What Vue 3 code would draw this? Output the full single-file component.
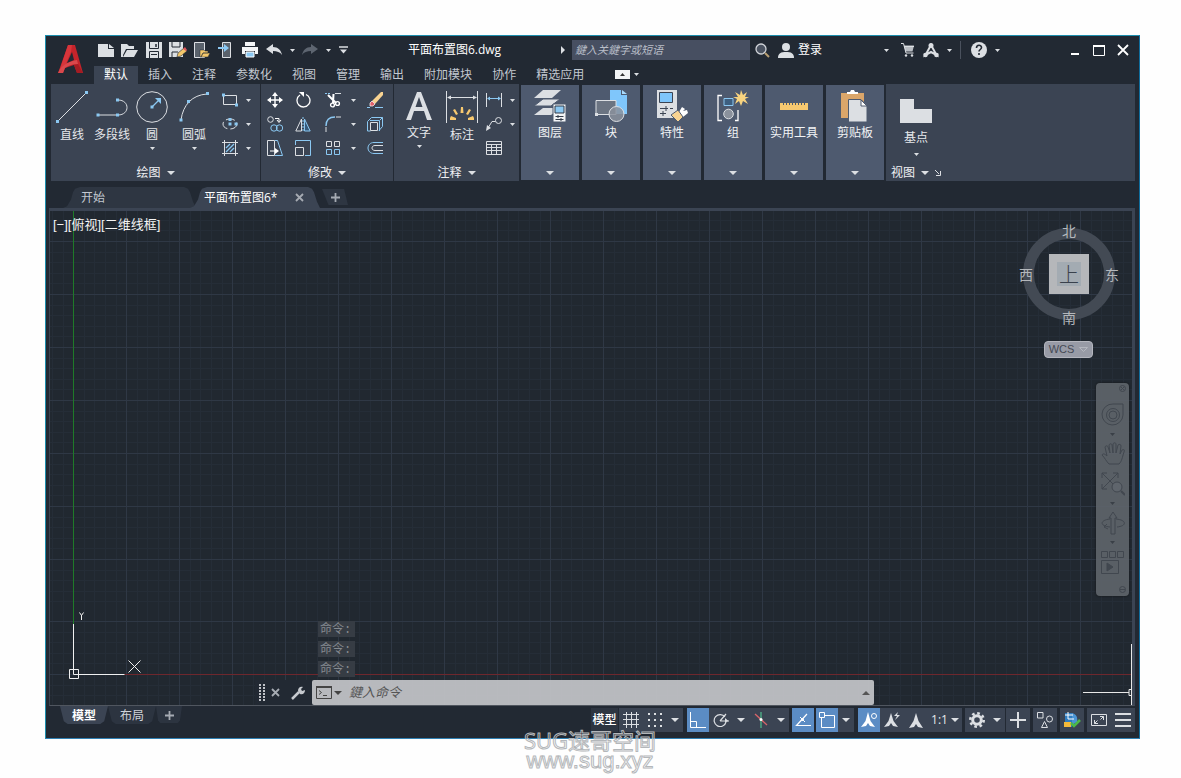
<script setup>
import { h } from 'vue'

const W = '#dcdfe3'
const B = '#8bc8f2'
const sq = (x, y) => `<path d="M${x - 1.5} ${y - 1.5}h3v3h-3z" fill="${B}" stroke="none"/>`

const icons = {
  logo: [25, 28, `<path d="M10 0h7l8 28h-6l-3-8-9 3-2 5H0z" fill="#c4242b" stroke="none"/><path d="M10 0h4l-1 7L7 21l-5 3z" fill="#d8353b" stroke="none"/><path d="M2 24c4-5 10-8 17-9l1 4c-6 0-10 2-13 4l-2 5H0z" fill="#d9484c" stroke="none"/><path d="M14 7l-5 11 7-3z" fill="#222933" stroke="none"/><path d="M16 20l4-1 5 9h-6z" fill="#a51c23" stroke="none"/>`],
  new: [16, 14, `<path d="M0 1h10v5h6v8H0z M11 1l5 4h-5z" fill="${W}" stroke="none"/>`],
  open: [18, 14, `<path d="M0 1h6l2 2h5v3H5l-3 6v2H0z M6 7h11l-4 7H2z" fill="${W}" stroke="none"/>`],
  save: [16, 16, `<path d="M0 0h16v16H0z" fill="${W}" stroke="none"/><path d="M3.500 0v6.500h9V0M3.500 16V9.500h9V16" stroke="#222933"/><path d="M10 2v3" stroke="#222933" stroke-width="1.500"/><path d="M5 12.500h6" stroke="#222933"/>`],
  saveas: [18, 16, `<path d="M0 0h14v15H0z" fill="${W}" stroke="none"/><path d="M3 0v5h8V0M3 15v-5h6" stroke="#222933"/><path d="M8 15l1-4 6-5 3 3-6 5z" fill="#f3c76b" stroke="#222933" stroke-width=".6"/><path d="M14 7l2-2 2 3-1 1z" fill="#e0545c" stroke="none"/>`],
  opendev: [16, 16, `<path d="M.5.5h10v15H.5z" fill="#5a626c" stroke="${W}"/><path d="M6 8h4l1 1h3v2H9l-2 4H6z M9 11h7l-2 4H7z" fill="#f3c76b" stroke="#222933" stroke-width=".5"/>`],
  savedev: [16, 16, `<path d="M4.500.5h8v15h-8z" fill="#5a626c" stroke="${W}"/><path d="M0 5h6V2l5 4-5 4V7H0z" fill="${B}" stroke="none"/>`],
  print: [16, 16, `<path d="M3 0h10v4H3z M0 5h16v7h-3V9H3v3H0z" fill="#f2f4f6" stroke="none"/><path d="M4 10h8v5H4z" fill="${B}" stroke="#fff"/>`],
  undo: [16, 12, `<path d="M7 0v3c5 0 8 3 9 8-2-3-5-4-9-4v3L0 5z" fill="${W}" stroke="none"/>`],
  redo: [16, 12, `<path d="M9 0v3C4 3 1 6 0 11c2-3 5-4 9-4v3l7-5z" fill="#5d6570" stroke="none"/>`],
  custom: [9, 8, `<path d="M0 1h9" stroke="${W}" stroke-width="1.500"/><path d="M1 3.500h7l-3.500 4z" fill="${W}"/>`],
  dn: [5, 3, `<path d="M0 0h5L2.500 3z" fill="${W}" stroke="none"/>`],
  DN: [8, 4, `<path d="M0 0h8L4 4z" fill="${W}" stroke="none"/>`],
  rt: [4, 8, `<path d="M0 0l4 4-4 4z" fill="${W}" stroke="none"/>`],
  ribbonToggle: [15, 9, `<path d="M0 0h15v9H0z" fill="#f2f4f6" stroke="none"/><path d="M5 6h5L7.500 3z" fill="#333" stroke="none"/>`],
  search: [15, 15, `<circle cx="6" cy="6" r="5" fill="#4a5260" stroke="#d0d3d8" stroke-width="1.300"/><path d="M10 10l4 4" stroke="#b99f72" stroke-width="2"/>`],
  user: [16, 15, `<circle cx="8" cy="4" r="4" fill="${W}" stroke="none"/><path d="M0 15c0-5 3-6 8-6s8 1 8 6z" fill="${W}" stroke="none"/>`],
  cart: [13, 14, `<path d="M3 2.500h10l-1.500 6H4.500z" fill="#b9bdc3" stroke="none"/><path d="M0 .5h2.500l2.500 9.500h7.500M3 3.500h10" stroke="${W}"/><circle cx="5" cy="12.500" r="1.200" fill="${W}" stroke="none"/><circle cx="11" cy="12.500" r="1.200" fill="${W}" stroke="none"/>`],
  app: [16, 15, `<path d="M8 2L2.500 12 8 9l5.500 3z" stroke="${W}" stroke-width="2"/><circle cx="8" cy="2.500" r="2.500" fill="${W}" stroke="none"/><circle cx="2.500" cy="12" r="2.300" fill="${W}" stroke="none"/><circle cx="13.500" cy="12" r="2.300" fill="${W}" stroke="none"/>`],
  help: [16, 16, `<circle cx="8" cy="8" r="8" fill="${W}" stroke="none"/><path d="M5.500 6c0-3.500 5-3.500 5-.5 0 2-2.500 2-2.500 4M8 11v2" stroke="#222933" stroke-width="1.600"/>`],
  min: [8, 10, `<path d="M0 9h8" stroke="#fff" stroke-width="2"/>`],
  max: [12, 11, `<path d="M.5 1h11v9.500H.5z" stroke="#fff"/><path d="M0 1h12" stroke="#fff" stroke-width="2"/>`],
  close: [12, 12, `<path d="M1 1l10 10M11 1L1 11" stroke="#fff" stroke-width="1.800"/>`],

  line: [32, 32, `<path d="M2 30L30 2" stroke="${W}"/>${sq(1.5, 30.5)}${sq(30.5, 1.5)}`],
  pline: [32, 32, `<path d="M2 24h20M22 9c12 0 12 15 0 15" stroke="${W}"/>${sq(2, 24)}${sq(21.5, 24)}${sq(21.5, 9)}`],
  circle: [32, 32, `<circle cx="16" cy="16" r="15.300" stroke="${W}"/><path d="M16 16l7-7" stroke="${B}" stroke-width="1.300"/><path d="M25 7v6l-6-6z" fill="${B}" stroke="none"/>${sq(16, 16)}`],
  arc: [32, 32, `<path d="M3 29C5 14 14 4 29 3" stroke="${W}"/>${sq(3, 29)}${sq(10.5, 10.5)}${sq(29.5, 2.5)}`],
  rect: [16, 14, `<path d="M1.500 2.500h13v9h-13z" stroke="${W}"/>${sq(1.5, 2)}${sq(14.5, 12)}`],
  ellipse: [16, 12, `<ellipse cx="8" cy="6" rx="7" ry="5" stroke="${W}" stroke-dasharray="9 3"/>${sq(8, 1.5)}${sq(8, 6)}${sq(14, 6)}`],
  hatch: [16, 16, `<path d="M2.500 0v16M13.500 0v16M0 2.500h16M0 13.500h16" stroke="${W}"/><path d="M4 8l4-4M4 12l8-8M8 12l4-4" stroke="${B}" stroke-width="1.300"/>`],
  move: [16, 16, `<path d="M8 2v12M2 8h12" stroke="#fff" stroke-width="1.400"/><path d="M8 0l3 4H5zM8 16l3-4H5zM0 8l4-3v6zM16 8l-4-3v6z" fill="#fff" stroke="none"/>`],
  rotate: [16, 16, `<path d="M5 3a6.500 6.500 0 1 0 6-.5" stroke="#fff" stroke-width="1.300"/><path d="M4 0h5v5z" fill="#fff" stroke="none"/>`],
  trim: [16, 16, `<path d="M0 1.500h6" stroke="${B}" stroke-dasharray="2 1"/><path d="M10 1.500h6" stroke="${W}"/><path d="M3 3l8 8M8.500 2L8 11" stroke="#fff" stroke-width="2"/><circle cx="7.500" cy="13" r="1.900" stroke="#fff" stroke-width="1.400"/><circle cx="12.500" cy="11.500" r="1.900" stroke="#fff" stroke-width="1.400"/>`],
  erase: [16, 17, `<path d="M5 9l9-9h2v3l-8 9z" fill="#f8d391" stroke="none"/><path d="M5 9l3 3-2 2H3v-3z" fill="#e2616a" stroke="#fff" stroke-width=".7"/><path d="M0 15.500h3M8 15.500h8" stroke="${B}"/>`],
  copy: [16, 16, `<circle cx="3.500" cy="3.500" r="2.800" stroke="${W}"/><circle cx="7" cy="12" r="3.200" stroke="${B}"/><circle cx="12.500" cy="12" r="3.200" stroke="${B}"/><path d="M8 2.500h4v3M10 4l2 2.500L14 4" stroke="#fff"/>`],
  mirror: [16, 15, `<path d="M.8 14H6.500V2z" stroke="${W}"/><path d="M15.200 14H9.500V2z" fill="#365a7b" stroke="${B}"/><path d="M8 0v15" stroke="${B}" stroke-dasharray="2 1"/>`],
  fillet: [16, 16, `<path d="M1 10C1 4 4 1 10 1" stroke="${B}" stroke-width="1.400"/><path d="M11 1h5M1 11v5" stroke="${W}"/>`],
  box: [16, 15, `<path d="M.5 4.500l4-4h11v9l-3.500 4M12.500 4v10M3 3.500h9.500l3-3M.5 4.500v9.500h3" stroke="${B}"/><path d="M3.500 5.500h7v8h-7z" stroke="${W}"/>`],
  stretch: [16, 16, `<path d="M.5.5h7v15h-7z" stroke="${W}"/><path d="M8 .5h2.500l5 15H8" stroke="${B}"/><path d="M3 11h7" stroke="#fff"/><path d="M8 8l4 3-4 3z" fill="#fff" stroke="none"/>`],
  scale: [16, 16, `<path d="M.5 5V.5h15v15H10" stroke="${B}"/><path d="M.5 7.500h8v8h-8z" stroke="${W}"/>`],
  array: [16, 16, `<path d="M1.500 1.500h5v5h-5zM9.500 1.500h5v5h-5z" stroke="${W}"/><path d="M1.500 9.500h5v5h-5zM9.500 9.500h5v5h-5z" stroke="${B}"/>`],
  offset: [16, 14, `<path d="M16 1.500H7c-8 0-8 11 0 11h9" stroke="${B}"/><path d="M16 4.500H8c-4 0-4 5 0 5h8" stroke="${W}"/>`],
  text: [26, 30, `<path d="M0 29L11 1h4l11 28h-5l-3-9H8l-3 9zM9.500 16h7L13 6z" fill="${W}" stroke="none" fill-rule="evenodd"/>`],
  dim: [32, 32, `<path d="M.5 0v32M31.500 0v32M3 6.500h26" stroke="${W}"/><path d="M1 6.500l4-2v4zM31 6.500l-4-2v4z" fill="${W}" stroke="none"/><path d="M15 16h2l.5 6h-3zM7 19l2-1 3 5-2 1zM25 19l-2-1-3 5 2 1zM4 27l1-2 5 2v2H4zM28 27l-1-2-5 2v2h6z" fill="#f8c96f" stroke="none"/>`],
  lindim: [16, 14, `<path d="M.5 0v14M15.500 0v14" stroke="${W}"/><path d="M2 5.500h12" stroke="${B}"/><path d="M1 5.500l3-2v4zM15 5.500l-3-2v4z" fill="${B}" stroke="none"/>`],
  leader: [16, 14, `<circle cx="12.500" cy="3.500" r="3" stroke="${W}"/><path d="M9.500 4.500H6L2 11" stroke="${W}"/><path d="M0 14l1-6 4 3z" fill="${W}" stroke="none"/>`],
  table: [16, 14, `<path d="M.5.5h15v13H.5zM.5 3.500h15M.5 6.500h15M.5 9.500h15M5.500 3.500v10M10.500 3.500v10" stroke="${W}"/>`],
  layers: [32, 33, `<path d="M9 18h17l-9 7H0z" fill="${W}" stroke="none"/><path d="M9 9h17l-9 7H0z" fill="${W}" stroke="#4e5a6f"/><path d="M9 0h18l-9 8H0z" fill="${W}" stroke="none"/><path d="M19 14h13v18H19z" fill="#f2f4f6" stroke="#4e5a6f"/><path d="M21 16h9v7h-9z" fill="${B}" stroke="#333c4a"/><path d="M21.500 26.500h8M21.500 29.500h8M24 25v3M27 28v3" stroke="#333c4a"/>`],
  block: [32, 32, `<path d="M15 0h11v5h6v19H15z" fill="#7fc6fb" stroke="none"/><path d="M27 0l5 4h-5z" fill="#a8dafd" stroke="none"/><path d="M1 10.500h20v14H1z" fill="#6b7482" stroke="${W}"/><circle cx="21.500" cy="24" r="7.500" fill="#8a919c" fill-opacity=".85" stroke="${W}"/><path d="M0 23h3v3H0z" fill="${W}" stroke="none"/>`],
  props: [31, 32, `<path d="M0 0h20v28H0z" fill="${W}" stroke="none"/><path d="M2.500 2.500h13v10h-13z" fill="#7fc6fb" stroke="#3b4453"/><path d="M3 18.500h8M3 23.500h6M9 16v5M6 21v5M13 18.500h3" stroke="#3b4453"/><path d="M22 22l3-5 3 2-2 2 4-1 1 3-5 4z" fill="#fff" stroke="none"/><path d="M14 25l7-5 5 7-5 5z" fill="#f8d391" stroke="#4e5a6f"/>`],
  group: [32, 32, `<path d="M5 5.500H1v25h4M18 30.500h3V20" stroke="#fff" stroke-width="1.300"/><path d="M7 8.500h9v7H7z" fill="#3d5f80" stroke="${B}"/><circle cx="11.500" cy="24" r="4.800" fill="#8a919c" stroke="${W}"/><path d="M24 0l2 5 4-3-2 5h4l-4 2 3 5-5-3-2 5-2-5-4 3 2-5-4-2h5l-3-5 5 3z" fill="#f8d37f" stroke="none"/>`],
  ruler: [28, 8, `<path d="M0 1h28v7H0z" fill="#f8c96f" stroke="none"/><path d="M3.500 0v3M6.500 0v3M9.500 0v3M12.500 0v3M15.500 0v3M18.500 0v3M21.500 0v3M24.500 0v3" stroke="#4e5a6f"/>`],
  clip: [28, 32, `<path d="M0 3h23v25H0z" fill="#dba66a" stroke="none"/><path d="M6 4V2h3l1-2h3l1 2h3v2z" fill="#fff" stroke="none"/><path d="M7.500 9.500H20l6 6V32H7.500z" fill="${W}" stroke="#4e5a6f"/><path d="M20 10v6h6z" fill="#fff" stroke="#4e5a6f"/>`],
  base: [32, 24, `<path d="M0 0h14v10h18v14H0z" fill="${W}" stroke="none"/>`],
  launch: [6, 6, `<path d="M0 0l4 4M5.500 1v4.500H1" stroke="${W}"/>`],
  x: [9, 9, `<path d="M1 1l7 7M8 1L1 8" stroke="#a6abb3" stroke-width="1.800"/>`],
  plus: [9, 9, `<path d="M4.500 0v9M0 4.500h9" stroke="#a6abb3" stroke-width="1.800"/>`],

  grip: [6, 17, `<path d="M1 0v17M5 0v17" stroke="#c0c3c8" stroke-width="2" stroke-dasharray="2 1"/>`],
  wrench: [14, 14, `<path d="M1 13l7-7" stroke="#c6c9ce" stroke-width="2.500"/><path d="M7 5c0-3 2-5 5-4L10 3l1 2 3-1c0 3-2 5-5 4z" fill="#c6c9ce" stroke="none"/>`],
  prompt: [16, 13, `<path d="M.5.5h15v12H.5z" stroke="#444"/><path d="M0 1h16" stroke="#444" stroke-width="2"/><path d="M3 4.500l2.500 2L3 8.500M7 9.500h4" stroke="#444"/>`],
  dnDark: [8, 4, `<path d="M0 0h8L4 4z" fill="#444" stroke="none"/>`],
  upDark: [8, 4, `<path d="M0 4h8L4 0z" fill="#555" stroke="none"/>`],

  sgrid: [16, 16, `<path d="M3.500 0v16M8.500 0v16M13.500 0v16M0 2.500h16M0 7.500h16M0 12.500h16" stroke="${W}"/>`],
  sdots: [14, 14, `<path d="M1 0v14M7 0v14M13 0v14" stroke="${W}" stroke-width="2" stroke-dasharray="2 4"/>`],
  ortho: [16, 16, `<path d="M.5 0v15.500H16M.5 9.500h6v6" stroke="#fff"/>`],
  polar: [16, 14, `<path d="M12 4a6 6 0 1 0 1 5" stroke="${W}" stroke-width="1.200"/><path d="M7 8h9M7 8l6-7" stroke="${W}" stroke-width="1.200"/><path d="M12 5l3.500 3-3.500 1.500z" fill="${W}" stroke="none"/>`],
  iso: [14, 16, `<path d="M7 0v16" stroke="#4fb58a" stroke-width="1.300"/><path d="M1 2l12 11" stroke="#d8646a" stroke-width="1.300"/><circle cx="7" cy="7.500" r="1.500" fill="#fff" stroke="none"/>`],
  otrack: [16, 14, `<path d="M16 12.500H1.500L12 1" stroke="#fff" stroke-width="1.200"/><path d="M5 4l5 5" stroke="#fff"/><circle cx="7.500" cy="6.500" r="1.500" fill="#fff" stroke="none"/>`],
  osnap: [16, 16, `<path d="M2.500 6v9.500h13v-12H6" stroke="#fff"/><path d="M.5.5h5v5h-5z" stroke="#fff"/>`],
  anno1: [16, 16, `<path d="M7 0l2.500 9 4.500 6-5-1-2-3-2 3-5 1 4.500-6z" fill="#fff" stroke="none"/><circle cx="13" cy="4" r="2.500" stroke="#fff"/>`],
  anno2: [16, 16, `<path d="M7 1l2.500 8 4.500 6-5-1-2-3-2 3-5 1 4.500-6z" fill="${W}" stroke="none"/><path d="M14 0l-4 4h3l-2 4 5-5h-3z" fill="${W}" stroke="none"/>`],
  anno3: [14, 15, `<path d="M7 0l2.500 8 4.500 7-5-1-2-3-2 3-5 1 4.500-7z" fill="${W}" stroke="none"/>`],
  gear: [16, 16, `<circle cx="8" cy="8" r="4.300" stroke="${W}" stroke-width="3"/><circle cx="8" cy="8" r="6.700" stroke="${W}" stroke-width="2.600" stroke-dasharray="2.630 2.630"/>`],
  splus: [16, 16, `<path d="M8 0v16M0 8h16" stroke="${W}" stroke-width="2"/>`],
  isolate: [16, 16, `<path d="M.5.5h5.500v5.500H.5zM4.500 15.500h6l-3-6z" stroke="${W}"/><circle cx="12.500" cy="7" r="3" stroke="${W}"/>`],
  perf: [17, 16, `<path d="M1 1h7v14H1z" fill="#2e7cc0" stroke="none"/><path d="M8 1c4 1 6 4 5 9l-5 3z" fill="#4a95d5" stroke="none"/><path d="M4 0v7h6M1 3h8" stroke="#fff"/><path d="M0 10h7v5H0z" fill="#f4b93a" stroke="none"/><path d="M7 11l3 3 6-6" stroke="#4db848" stroke-width="2.500"/>`],
  expand: [16, 12, `<path d="M.5.5h15v11H.5z" stroke="${W}"/><path d="M3.500 6v3.500H7M9 2.500h3.500V6M3.500 9.500l3-3M12.500 2.500l-3 3" stroke="${W}"/>`],
  menu: [16, 14, `<path d="M0 1h16M0 7h16M0 13h16" stroke="${W}" stroke-width="2"/>`],

  wheel: [24, 24, `<path d="M12 1h10v11A10.500 10.500 0 1 1 12 1z"/><circle cx="12" cy="12" r="6.500"/><circle cx="12" cy="12" r="4"/>`],
  hand: [24, 24, `<path d="M8 22c-3-3-4-6-7-9 1-2 3-1 5 1L4 5c1-2 3-1 3 0l2 6-1-8c1-2 3-1 3 0l1 8V2c1-2 3-1 3 0v9l2-8c1-1 3-1 3 1l-1 8 2-4c2-1 3 0 2 2-2 6-2 9-5 12z"/>`],
  zoomx: [24, 24, `<path d="M1 1l16 16M17 1L1 17M1 6V1h5M12 1h5v5M1 12v5h5"/><circle cx="16" cy="15" r="5" fill="#5f656c"/><path d="M20 19l4 4" stroke-width="2"/>`],
  orbit: [24, 24, `<path d="M10 23V7H8l4-6 4 6h-2v16zM9 8C-1 9-2 15 9 16M15 8c11 1 11 7 1 8M6 13l-3 3 4 2"/>`],
  motion: [24, 24, `<path d="M.5 1.500h6v6h-6zM8.500 1.500h6v6h-6zM16.500 1.500h6v6h-6zM.5 10.500h17v13H.5z"/><path d="M6 13v8l6-4z" fill="#41474f"/>`],
  navx: [7, 7, `<circle cx="3.500" cy="3.500" r="3"/><path d="M2 2l3 3M5 2L2 5"/>`],
  navm: [7, 7, `<circle cx="3.500" cy="3.500" r="3"/><path d="M1 3.500h5"/>`],
  navdn: [5, 3, `<path d="M0 0h5L2.500 3z" fill="#3a4047" stroke="none"/>`]
}

const Icon = (p) => {
  const [w, hh, body] = icons[p.n]
  return h('svg', { class: 'ic', width: w, height: hh, viewBox: `0 0 ${w} ${hh}`, fill: 'none', 'aria-hidden': 'true', innerHTML: body })
}
Icon.props = ['n']

const quick = [
  ['new', '新建'], ['open', '打开'], ['save', '保存'], ['saveas', '另存为'], ['opendev', '从设备打开'],
  ['savedev', '保存到设备'], ['print', '打印'], ['undo', '放弃'], ['dn', '放弃列表'], ['redo', '重做'],
  ['dn', '重做列表'], ['custom', '自定义']
]
const slot = { dn: 'b12', custom: 'b18' }
const tabs = ['默认', '插入', '注释', '参数化', '视图', '管理', '输出', '附加模块', '协作', '精选应用']
const draw = [['line', '直线'], ['pline', '多段线'], ['circle', '圆', 1], ['arc', '圆弧', 1]]
const drawSmall = [['rect', '矩形'], ['ellipse', '椭圆'], ['hatch', '图案填充']]
const modify = [
  ['move', '移动'], ['rotate', '旋转'], ['trim', '修剪'], ['dn', '修剪选项'], ['erase', '删除'],
  ['copy', '复制'], ['mirror', '镜像'], ['fillet', '圆角'], ['dn', '圆角选项'], ['box', '分解'],
  ['stretch', '拉伸'], ['scale', '缩放'], ['array', '阵列'], ['dn', '阵列选项'], ['offset', '偏移']
]
const annotate = [['text', '文字', 1], ['dim', '标注']]
const annoSmall = [['lindim', '线性', 1], ['leader', '引线', 1], ['table', '表格']]
const collapsed = [['layers', '图层'], ['block', '块'], ['props', '特性'], ['group', '组'], ['ruler', '实用工具'], ['clip', '剪贴板']]

const status = [
  { gap: 1, items: [['sgrid', '栅格'], ['sdots', '捕捉'], ['DN', '捕捉选项']] },
  { gap: 4, items: [['ortho', '正交', 1], ['polar', '极轴'], ['DN', '极轴选项'], ['iso', '等轴测'], ['DN', '等轴测选项']] },
  { gap: 3, items: [['otrack', '对象追踪', 1]] },
  { gap: 2, items: [['osnap', '对象捕捉', 1], ['DN', '对象捕捉选项']] },
  { gap: 4, items: [['anno1', '注释可见性', 1], ['anno2', '自动缩放'], ['anno3', '注释比例'], ['scale', '比例']] },
  { gap: 3, items: [['gear', '工作空间'], ['DN', '工作空间选项']] },
  { gap: 1, items: [['splus', '注释监视器']] },
  { gap: 3, items: [['isolate', '隔离对象']] },
  { gap: 3, items: [['perf', '图形性能']] },
  { gap: 3, items: [['expand', '全屏'], ['menu', '自定义状态栏']] }
]

const cols = Array.from({ length: 45 }, (_, i) => 76.5 + i * 53)
const rows = [30.5, 83.5, 136.5, 189.5, 242.5, 295.5, 348.5, 410.5, 463.5]
const minorCols = Array.from({ length: 226 }, (_, i) => 2.5 + Math.round(i * 10.6))
const minorRows = [9.5, 19.5]
rows.forEach((y) => { for (let k = 1; k < 5; k++) minorRows.push(y + Math.round(k * 10.6)) })
</script>

<template>
  <div class="page">
    <main class="window">
      <header class="head">
        <button class="logo" aria-label="应用程序菜单"><Icon n="logo" /></button>
        <div class="head-main">
          <div class="title-row">
            <button v-for="(q, i) in quick" :key="i" :aria-label="q[1]" :class="slot[q[0]] || 'b24'"><Icon :n="q[0]" /></button>
            <h1 class="title">平面布置图6.dwg</h1>
            <button class="b12" aria-label="展开搜索"><Icon n="rt" /></button>
            <input class="search" type="text" aria-label="搜索" placeholder="鍵入关鍵字或短语">
            <button class="b24" aria-label="搜索"><Icon n="search" /></button>
            <button class="login"><Icon n="user" />登录</button>
            <button class="b12" aria-label="登录选项"><Icon n="dn" /></button>
            <button class="b24 cart" aria-label="购物车"><Icon n="cart" /></button>
            <button class="b24" aria-label="应用商店"><Icon n="app" /></button>
            <button class="b12" aria-label="应用选项"><Icon n="dn" /></button>
            <span class="vsep"></span>
            <button class="b24" aria-label="帮助"><Icon n="help" /></button>
            <button class="b12" aria-label="帮助选项"><Icon n="dn" /></button>
            <div class="wincontrols">
              <button class="b24" aria-label="最小化"><Icon n="min" /></button>
              <button class="b24" aria-label="最大化"><Icon n="max" /></button>
              <button class="b24" aria-label="关闭"><Icon n="close" /></button>
            </div>
          </div>
          <nav class="tabs">
            <button v-for="(t, i) in tabs" :key="t" class="tab" :class="{ on: i === 0 }">{{ t }}</button>
            <button class="toggle" aria-label="最小化功能区"><Icon n="ribbonToggle" /></button>
            <button class="b12" aria-label="功能区选项"><Icon n="dn" /></button>
          </nav>
        </div>
      </header>

      <section class="ribbon">
        <div class="panel">
          <div class="tools draw">
            <button v-for="d in draw" :key="d[1]" class="big"><Icon :n="d[0]" /><span>{{ d[1] }}</span><Icon v-if="d[2]" n="dn" /></button>
            <div class="small">
              <template v-for="s in drawSmall" :key="s[1]">
                <button :aria-label="s[1]"><Icon :n="s[0]" /></button>
                <button :aria-label="s[1] + '选项'"><Icon n="dn" /></button>
              </template>
            </div>
          </div>
          <button class="ptitle">绘图<Icon n="DN" /></button>
        </div>
        <div class="panel">
          <div class="tools modify">
            <button v-for="m in modify" :key="m[1]" :aria-label="m[1]"><Icon :n="m[0]" /></button>
          </div>
          <button class="ptitle">修改<Icon n="DN" /></button>
        </div>
        <div class="panel">
          <div class="tools anno">
            <button v-for="d in annotate" :key="d[1]" class="big"><Icon :n="d[0]" /><span>{{ d[1] }}</span><Icon v-if="d[2]" n="dn" /></button>
            <div class="small">
              <template v-for="s in annoSmall" :key="s[1]">
                <button :aria-label="s[1]"><Icon :n="s[0]" /></button>
                <button v-if="s[2]" :aria-label="s[1] + '选项'"><Icon n="dn" /></button>
              </template>
            </div>
          </div>
          <button class="ptitle">注释<Icon n="DN" /></button>
        </div>
        <button v-for="c in collapsed" :key="c[1]" class="cpanel">
          <span class="cicon"><Icon :n="c[0]" /></span><span>{{ c[1] }}</span><Icon n="DN" />
        </button>
        <div class="panel view">
          <button class="basept"><Icon n="base" /><span>基点</span><Icon n="dn" /></button>
          <button class="ptitle">视图<Icon n="DN" /><Icon n="launch" /></button>
        </div>
      </section>

      <nav class="doctabs">
        <button class="doc">开始</button>
        <div class="doc on"><button>平面布置图6*</button><button aria-label="关闭图形"><Icon n="x" /></button></div>
        <button class="doc add" aria-label="新图形"><Icon n="plus" /></button>
      </nav>

      <section class="drawing">
        <svg class="grid" width="100%" height="100%" aria-hidden="true">
          <g stroke="#252d37">
            <line v-for="x in minorCols" :key="'a' + x" :x1="x" :x2="x" y1="0" y2="100%" />
            <line v-for="y in minorRows" :key="'b' + y" :y1="y" :y2="y" x1="0" x2="100%" />
          </g>
          <g stroke="#2f3845">
            <line v-for="x in cols" :key="'c' + x" :x1="x" :x2="x" y1="0" y2="100%" />
            <line v-for="y in rows" :key="'d' + y" :y1="y" :y2="y" x1="0" x2="100%" />
          </g>
          <rect x="23" y="0" width="1" height="414" fill="#1f7a28" />
          <line x1="74" y1="463.500" x2="100%" y2="463.500" stroke="#6e272d" />
          <g fill="none" stroke="#f0f0f0">
            <path d="M23.500 413v50.500H74.500M19.500 458.500h9v9h-9zM78.500 449.500l12 12M90.500 449.500l-12 12" />
            <path d="M29.500 401.500l2 3 2-3M31.500 404v5" />
          </g>
        </svg>
        <svg class="crosshair" width="50" height="61" aria-hidden="true">
          <path d="M48.500 0v61M0 48.500h46M46 45.500h4v6h-4z" fill="none" stroke="#e8e8e8" />
        </svg>
        <div class="vplabel">[−][俯视][二维线框]</div>

        <div class="cube">
          <div class="ring"></div>
          <button class="n">北</button><button class="w">西</button>
          <button class="top"><span>上</span></button>
          <button class="e">东</button><button class="s">南</button>
        </div>
        <button class="wcs">WCS<svg width="9" height="6" viewBox="0 0 9 6" aria-hidden="true"><path d="M.5.5h8l-4 4z" fill="none" stroke="#b4b7bf" /></svg></button>

        <div class="navbar">
          <button class="edge" aria-label="关闭导航栏"><Icon n="navx" /></button>
          <button aria-label="控制盘"><Icon n="wheel" /><Icon n="navdn" /></button>
          <button aria-label="平移"><Icon n="hand" /></button>
          <button aria-label="范围缩放"><Icon n="zoomx" /><Icon n="navdn" /></button>
          <button aria-label="动态观察"><Icon n="orbit" /><Icon n="navdn" /></button>
          <button aria-label="ShowMotion"><Icon n="motion" /></button>
          <button class="edge" aria-label="导航栏选项"><Icon n="navm" /></button>
        </div>

        <div class="history"><span v-for="i in 3" :key="i">命令:</span></div>
        <div class="cmd">
          <div class="cmdtools">
            <Icon n="grip" />
            <button aria-label="关闭命令行"><Icon n="x" /></button>
            <button aria-label="命令行设置"><Icon n="wrench" /></button>
          </div>
          <div class="cmdbox">
            <button class="recent" aria-label="最近使用的命令"><Icon n="prompt" /><Icon n="dnDark" /></button>
            <input type="text" aria-label="命令" placeholder="鍵入命令">
            <button aria-label="展开历史"><Icon n="upDark" /></button>
          </div>
        </div>
      </section>

      <footer class="foot">
        <div class="layouts">
          <button class="lay on">模型</button><button class="lay">布局</button><button class="lay plus" aria-label="新建布局"><Icon n="plus" /></button>
        </div>
        <div class="status">
          <button class="model">模型</button>
          <div v-for="(g, i) in status" :key="i" class="sg" :class="'g' + g.gap">
            <button v-for="it in g.items" :key="it[1]" :aria-label="it[1]" :class="{ on: it[2], car: it[0] === 'DN', ratio: it[0] === 'scale' }">
              <template v-if="it[0] === 'scale'">1:1<Icon n="DN" /></template>
              <Icon v-else :n="it[0]" />
            </button>
          </div>
        </div>
      </footer>
    </main>
    <div class="mark"><div class="m1">SUG速哥空间</div><div class="m2">www.sug.xyz</div></div>
  </div>
</template>

<style>
body { margin: 0; background: #fefefe; }
</style>

<style scoped>
* { box-sizing: border-box; }
.page { display: flex; flex-direction: column; height: 100vh; min-height: 600px; padding: 35px 41px 0 45px; font: 12px/16px "Open Sans", "Noto Sans CJK SC", sans-serif; color: #e6e8eb; }
button { display: flex; align-items: center; justify-content: center; padding: 0; border: 0; background: none; color: inherit; font: inherit; white-space: nowrap; }
.ic { display: block; flex: none; }
.window { flex: 1; min-height: 0; display: flex; flex-direction: column; background: #222933; border: 1px solid #1d8fae; border-right-color: #0f6c9c; border-bottom-color: #2f80b4; }
.head { display: flex; height: 48px; flex: none; }
.logo { width: 48px; align-items: flex-start; padding-top: 9px; }
.head-main { flex: 1; min-width: 0; }
.title-row { display: flex; align-items: center; height: 28px; }
.b24 { width: 24px; height: 24px; flex: none; }
.b18 { width: 18px; height: 24px; flex: none; }
.b12 { width: 12px; height: 20px; flex: none; }
.title { flex: 1; margin: 0; text-align: center; font-size: 12px; font-weight: 400; color: #fff; white-space: nowrap; }
.search { width: 178px; height: 20px; margin: 0 1px 0 3px; padding: 0 3px; border: 0; border-radius: 0; background: #474f61; color: #fff; font: italic 11px/20px "Open Sans", "Noto Sans CJK SC", sans-serif; }
.search::placeholder { color: #b9bec8; opacity: 1; }
.login { gap: 4px; margin: 0 58px 0 3px; color: #fff; }
.cart { margin-left: 3px; }
.vsep { width: 1px; height: 18px; margin: 0 6px 0 5px; background: #4a515d; }
.wincontrols { display: flex; margin: 0 4px 0 60px; }
.tabs { display: flex; align-items: flex-end; height: 20px; }
.tab { height: 18px; padding: 0 10px; color: #c3c8d0; }
.tab.on { background: #3b4453; color: #fff; }
.toggle { width: 16px; height: 20px; margin: 0 0 0 20px; }

.ribbon { display: flex; height: 97px; flex: none; margin: 0 4px 0 5px; background: #222933; }
.panel { display: flex; flex-direction: column; justify-content: space-between; background: #3b4453; margin-right: 1px; }
.tools { display: flex; padding: 4px 1px 0 2px; }
.big { flex-direction: column; justify-content: flex-start; width: 40px; height: 64px; padding-top: 3px; gap: 3px; }
.big > span { line-height: 18px; }
.draw { padding: 4px 6px 0 1px; }
.draw .big:nth-child(4) { width: 46px; padding-right: 2px; }
.anno .big:first-child { width: 46px; }
.small { display: grid; grid-template-columns: 24px 12px; grid-auto-rows: 24px; }
.modify { display: grid; grid-template-columns: 28px 28px 32px 8px 36px; grid-auto-rows: 24px; padding: 4px 0 0; }
.ptitle { height: 16px; gap: 6px; color: #f0f1f3; }
.cpanel { flex-direction: column; justify-content: flex-start; width: 58px; margin: 1px 2px 1px 1px; padding: 3px 0 5px; background: #4e5a6f; color: #f2f4f6; }
.cicon { display: flex; align-items: center; justify-content: center; height: 36px; margin-bottom: 1px; }
.cpanel > .ic:last-child { margin-top: auto; }
.view { flex: 1; margin: 0; align-items: flex-start; }
.basept { flex-direction: column; width: 60px; padding-top: 15px; gap: 6px; }
.basept span { line-height: 18px; }
.view .ptitle { padding-left: 5px; }

.doctabs { display: flex; align-items: flex-end; height: 27px; flex: none; padding-left: 17px; }
.doc { display: flex; align-items: center; justify-content: flex-start; width: 133px; height: 21px; padding: 0 0 0 18px; background: #2e3642; color: #c3c8d0; clip-path: polygon(0 100%, 4px 92%, 8px 60%, 10px 25%, 12px 8%, 17px 0, calc(100% - 12px) 0, calc(100% - 8px) 8%, calc(100% - 6px) 25%, calc(100% - 3px) 70%, 100% 100%); }
.doc.on { width: 130px; margin-left: -6px; padding: 0 16px 0 14px; justify-content: space-between; background: #3b4453; color: #fff; }
.doc.add { width: 26px; height: 16px; margin: 0 0 3px 2px; padding: 0; justify-content: center; clip-path: polygon(0 0, 85% 0, 100% 100%, 25% 100%); }

.drawing { position: relative; flex: 1; min-height: 0; overflow: hidden; margin: 0 4px 0 3px; border: solid #3b4453; border-width: 3px 3px 1px 1px; border-bottom-color: #50565f; background: #212830; }
.grid { position: absolute; inset: 0; display: block; }
.crosshair { position: absolute; right: -1px; bottom: 0; }
.vplabel { position: absolute; left: 3px; top: 5px; color: #f4f4f4; font: 13px/18px "Liberation Sans", "Noto Sans CJK SC", sans-serif; }
.cube { position: absolute; right: 12px; top: 12px; width: 102px; height: 104px; color: #b5b8bc; font-size: 14px; }
.ring { position: absolute; left: 5px; top: 5px; width: 92px; height: 92px; border: 11px solid #434a54; border-radius: 50%; }
.cube button { position: absolute; width: 16px; height: 16px; }
.cube .n { left: 43px; top: 0; }
.cube .s { left: 43px; bottom: 1px; }
.cube .w { left: 0; top: 44px; }
.cube .e { right: 0; top: 44px; }
.cube .top { left: 31px; top: 31px; width: 40px; height: 40px; background: #b5b7ba; color: #39414c; font: 300 20px/24px "Noto Sans CJK SC", sans-serif; }
.top span { width: 24px; height: 24px; background: #a3abb2; }
.wcs { position: absolute; right: 39px; top: 130px; width: 49px; height: 17px; gap: 5px; border: 1px solid #b4b6be; border-radius: 4px; background: #989ba6; color: #454a55; font: 11px/15px "Liberation Sans", sans-serif; }
.navbar { position: absolute; right: 3px; top: 172px; width: 33px; height: 213px; display: flex; flex-direction: column; gap: 6px; padding: 2px 3px 3px; border-radius: 4px; background: #5f656ce6; box-shadow: 0 0 2px #111; }
.navbar button { flex-direction: column; gap: 6px; }
.navbar .edge { align-self: flex-end; }
.navbar .edge:first-child { margin-bottom: 5px; }
.navbar .edge:last-child { margin-top: auto; }
.navbar .ic { stroke: #41474f; }
.history { position: absolute; left: 268px; bottom: 28px; display: grid; gap: 4px; }
.history span { width: 37px; height: 16px; padding-left: 2px; background: #363c44; color: #858a90; font: 12px/18px "Liberation Mono", "Noto Sans CJK SC", monospace; }
.cmd { position: absolute; left: 205px; right: 258px; bottom: 0; display: flex; height: 25px; }
.cmdtools { display: flex; align-items: center; width: 57px; padding-left: 4px; background: #222933; gap: 3px; }
.cmdtools button { width: 14px; height: 20px; }
.cmdtools button + button { margin-left: 6px; }
.cmdbox { flex: 1; display: flex; background: #c0c1c5f2; border-radius: 2px; }
.recent { gap: 2px; padding: 0 7px 0 4px; }
.cmdbox input { flex: 1; min-width: 0; border: 0; padding: 0; background: none; color: #222; font: italic 13px/25px "Open Sans", "Noto Sans CJK SC", sans-serif; }
.cmdbox input::placeholder { color: #555; opacity: 1; }
.cmdbox button:last-child { width: 16px; }

.foot { display: flex; justify-content: space-between; height: 32px; flex: none; padding: 0 4px 0 14px; }
.layouts { display: flex; }
.lay { width: 48px; height: 18px; padding-top: 1px; background: #2c3440; color: #cfd3d8; clip-path: polygon(0 0, 100% 0, 92% 85%, 84% 100%, 16% 100%, 8% 85%); }
.lay.on { background: #3b4453; color: #fff; font-weight: 700; }
.lay.plus { width: 26px; height: 17px; }
.status { display: flex; align-items: flex-start; padding-top: 2px; }
.status button { width: 24px; height: 24px; }
.status .model { width: 27px; background: #2d3541; color: #fff; font-weight: 500; }
.sg { display: flex; background: #3b4453; }
.g1 { margin-left: 1px; }
.g2 { margin-left: 2px; }
.g3 { margin-left: 3px; }
.g4 { margin-left: 4px; }
.status .on { width: 22px; background: #5b8cc4; }
.status .car { width: 16px; }
.status .ratio { width: 34px; gap: 3px; }
.mark { flex: none; align-self: center; height: 48px; margin-top: -9px; padding-right: 5px; position: relative; text-align: center; color: transparent; -webkit-text-stroke: 1px #b4b7ba; }
.m1 { font: 22px/21px "Open Sans", "Noto Sans CJK SC", sans-serif; }
.m2 { font: 22px/20px "Liberation Sans", "Open Sans", sans-serif; }
</style>
